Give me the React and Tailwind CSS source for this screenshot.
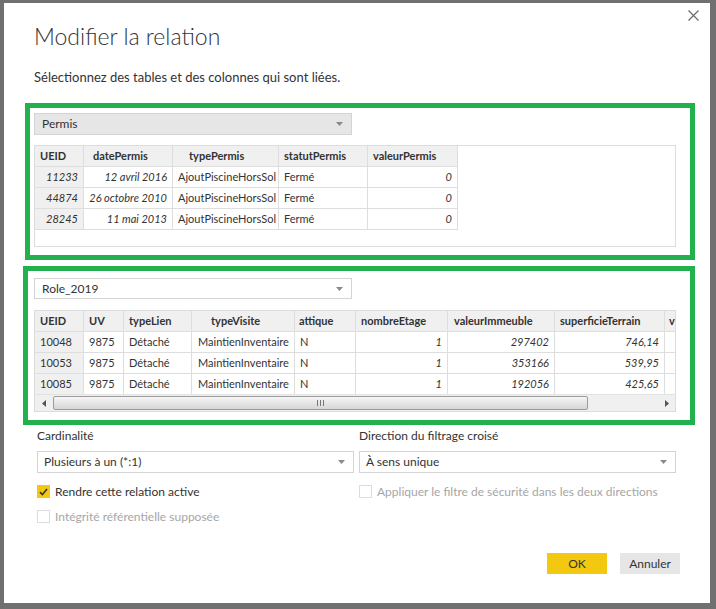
import React from 'react';

const font = { fontFamily: 'Lato, "Open Sans", sans-serif' };

const Caret = () => (
    <svg width="7" height="4" viewBox="0 0 7 4" className="shrink-0">
        <path d="M0 0h7L3.5 4z" fill="#8a8a8a" />
    </svg>
);

const Select = ({ label, className }) => (
    <div className={`flex items-center justify-between border border-[#d4d4d4] text-[12px] text-[#333] ${className}`}>
        <span>{label}</span>
        <Caret />
    </div>
);

const Cell = ({ w, head, gray, right, italic, pl = 5, children }) => (
    <div
        className={`h-[21px] shrink-0 border-r border-b border-[#dedede] text-[11px] leading-[20px] whitespace-nowrap overflow-hidden pr-[5px] ${head ? 'font-bold text-[#333] bg-[#f0f0f0]' : 'text-[#333]'} ${gray ? 'bg-[#f0f0f0]' : ''} ${right ? 'text-right' : ''} ${italic ? 'italic' : ''}`}
        style={{ width: w, paddingLeft: pl }}
    >
        {children}
    </div>
);

const permisCols = [
    { k: 'UEID', w: 49, hpl: 5, right: true, italic: true, gray: true },
    { k: 'datePermis', w: 89, hpl: 9, right: true, italic: true },
    { k: 'typePermis', w: 106, hpl: 16 },
    { k: 'statutPermis', w: 89, hpl: 5 },
    { k: 'valeurPermis', w: 90, hpl: 5, right: true, italic: true },
];

const permisRows = [
    ['11233', '12 avril 2016', 'AjoutPiscineHorsSol', 'Fermé', '0'],
    ['44874', '26 octobre 2010', 'AjoutPiscineHorsSol', 'Fermé', '0'],
    ['28245', '11 mai 2013', 'AjoutPiscineHorsSol', 'Fermé', '0'],
];

// last column is cut by the grid's edge, only its first letter shows
const roleCols = [
    { k: 'UEID', w: 49, hpl: 5, gray: true },
    { k: 'UV', w: 40, hpl: 5 },
    { k: 'typeLien', w: 68, hpl: 5 },
    { k: 'typeVisite', w: 103, hpl: 19, pl: 6 },
    { k: 'attique', w: 61, hpl: 4 },
    { k: 'nombreEtage', w: 92, hpl: 5, right: true, italic: true },
    { k: 'valeurImmeuble', w: 107, hpl: 6, right: true, italic: true },
    { k: 'superficieTerrain', w: 110, hpl: 5, right: true, italic: true },
    { k: 'v', w: 12, hpl: 4 },
];

const roleRows = [
    ['10048', '9875', 'Détaché', 'MaintienInventaire', 'N', '1', '297402', '746,14', ''],
    ['10053', '9875', 'Détaché', 'MaintienInventaire', 'N', '1', '353166', '539,95', ''],
    ['10085', '9875', 'Détaché', 'MaintienInventaire', 'N', '1', '192056', '425,65', ''],
];

const Grid = ({ cols, rows }) => (
    <div className="flex flex-col">
        <div className="flex">
            {cols.map((c) => (
                <Cell key={c.k} w={c.w} head pl={c.hpl}>{c.k}</Cell>
            ))}
        </div>
        {rows.map((r, i) => (
            <div key={i} className="flex">
                {cols.map((c, j) => (
                    <Cell key={c.k} w={c.w} gray={c.gray} right={c.right} italic={c.italic} pl={c.pl ?? 5}>
                        {r[j]}
                    </Cell>
                ))}
            </div>
        ))}
    </div>
);

const Scrollbar = () => (
    <div className="flex items-center h-[17px] bg-[#f0f0f0] border-t border-[#e2e2e2]">
        <div className="w-[18px] flex justify-center">
            <svg width="4" height="7" viewBox="0 0 4 7"><path d="M4 0v7L0 3.5z" fill="#555" /></svg>
        </div>
        <div className="w-[535px] h-[14px] rounded-[2px] border border-[#9c9c9c] bg-gradient-to-b from-[#f6f6f6] to-[#d6d6d6] flex items-center justify-center">
            <div className="flex gap-[2px]">
                <div className="w-px h-[6px] bg-[#777]" />
                <div className="w-px h-[6px] bg-[#777]" />
                <div className="w-px h-[6px] bg-[#777]" />
            </div>
        </div>
        <div className="flex-1" />
        <div className="w-[17px] flex justify-center">
            <svg width="4" height="7" viewBox="0 0 4 7"><path d="M0 0v7L4 3.5z" fill="#555" /></svg>
        </div>
    </div>
);

const Check = ({ checked, disabled, children }) => (
    <div className="flex items-center gap-[5px] h-[13px]">
        {checked ? (
            <div className="w-[13px] h-[13px] shrink-0 bg-[#f2c811] flex items-center justify-center">
                <svg width="9" height="8" viewBox="0 0 9 8"><path d="M1 4.2L3.4 6.5 8 1" stroke="#333" strokeWidth="1.6" fill="none" /></svg>
            </div>
        ) : (
            <div className="w-[13px] h-[13px] shrink-0 border border-[#dcdcdc] bg-white" />
        )}
        <span className={`text-[12px] leading-[16px] whitespace-nowrap ${disabled ? 'text-[#a6a6a6]' : 'text-[#333]'}`}>{children}</span>
    </div>
);

export default function App() {
    return (
        <div className="w-[716px] h-[609px] bg-[#707070] pt-[3px] pl-[4px] pr-[6px] pb-[6px]" style={font}>
            <div className="relative h-[600px] bg-white flex flex-col">
                {/* close */}
                <svg className="absolute top-[7px] right-[11px]" width="11" height="11" viewBox="0 0 11 11">
                    <path d="M0.5 0.5l10 10M10.5 0.5l-10 10" stroke="#6b6b6b" strokeWidth="1.2" />
                </svg>

                <h1 className="mt-[18px] pl-[30px] text-[23px] leading-[30px] font-light text-[#333]">Modifier la relation</h1>
                <p className="mt-[16px] pl-[30px] text-[13px] leading-[20px] text-[#333]">Sélectionnez des tables et des colonnes qui sont liées.</p>

                {/* table 1 */}
                <div className="mt-[16px] ml-[21px] mr-[15px] border-[5px] border-[#22b14c] pt-[5px] pl-[4px] pr-[14px] pb-[8px] flex flex-col gap-[10px]">
                    <Select label="Permis" className="w-[318px] h-[22px] bg-[#e6e6e6] border-[#c8c8c8] pl-[7px] pr-[8px]" />
                    <div className="h-[102px] border border-[#dcdcdc] overflow-hidden">
                        <Grid cols={permisCols} rows={permisRows} />
                    </div>
                </div>

                {/* table 2 */}
                <div className="mt-[6px] ml-[19px] mr-[15px] border-[5px] border-[#22b14c] pt-[7px] pl-[6px] pr-[14px] pb-[8px] flex flex-col gap-[11px]">
                    <Select label="Role_2019" className="w-[318px] h-[21px] bg-white pl-[7px] pr-[8px]" />
                    <div className="h-[102px] border border-[#dcdcdc] overflow-hidden flex flex-col">
                        <div className="h-[84px] overflow-hidden">
                            <Grid cols={roleCols} rows={roleRows} />
                        </div>
                        <Scrollbar />
                    </div>
                </div>

                {/* options */}
                <div className="mt-[3px] pl-[33px] pr-[34px] grid grid-cols-2 gap-x-[5px]">
                    <div className="flex flex-col">
                        <span className="text-[12px] leading-[16px] text-[#333]">Cardinalité</span>
                        <Select label="Plusieurs à un (*:1)" className="mt-[7px] h-[22px] bg-white pl-[6px] pr-[8px]" />
                        <div className="mt-[12px]">
                            <Check checked>Rendre cette relation active</Check>
                        </div>
                        <div className="mt-[12px]">
                            <Check disabled>Intégrité référentielle supposée</Check>
                        </div>
                    </div>
                    <div className="flex flex-col">
                        <span className="text-[12px] leading-[16px] text-[#333]">Direction du filtrage croisé</span>
                        <Select label="À sens unique" className="mt-[7px] h-[22px] bg-white pl-[6px] pr-[8px]" />
                        <div className="mt-[12px]">
                            <Check disabled>Appliquer le filtre de sécurité dans les deux directions</Check>
                        </div>
                    </div>
                </div>

                <div className="mt-auto mb-[29px] pr-[30px] flex justify-end gap-[13px]">
                    <button className="w-[60px] h-[21px] bg-[#f2c811] text-[12px] text-[#333]">OK</button>
                    <button className="w-[60px] h-[21px] bg-[#e6e6e6] text-[12px] text-[#333]">Annuler</button>
                </div>
            </div>
        </div>
    );
}
